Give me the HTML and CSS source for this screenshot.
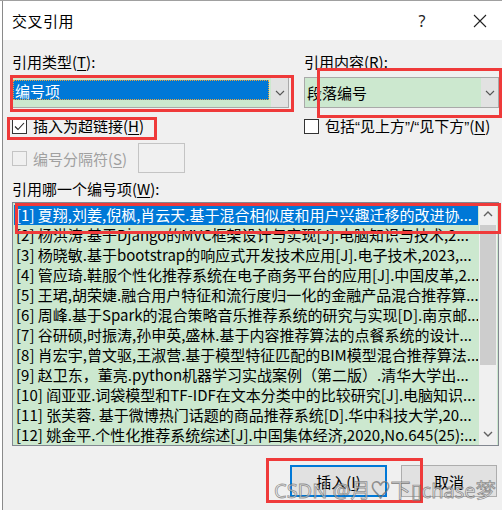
FILE: index.html
```html
<!DOCTYPE html>
<html lang="zh-CN">
<head>
    <meta charset="UTF-8">
    <title>交叉引用</title>
    <link rel="stylesheet" href="styles.css">
</head>
<body>
    <div class="window">
        <div class="dialog">
            <div class="titlebar">
                <span class="title">交叉引用</span>
                <span class="help">?</span>
                <span class="close">
                    <svg width="14" height="14" viewBox="0 0 14 14"><path d="M1 1 L13 13 M13 1 L1 13" stroke="#222" stroke-width="1.1" fill="none"/></svg>
                </span>
            </div>

            <div class="body">
                <div class="pair labels">
                    <div>引用类型(<u>T</u>):</div>
                    <div>引用内容(<u>R</u>):</div>
                </div>

                <div class="pair selects">
                    <div class="combo">
                        <span class="combo-value selected">编号项</span>
                        <span class="combo-btn">
                            <svg width="10" height="6" viewBox="0 0 10 6"><path d="M1 1 L5 5 L9 1" stroke="#555" stroke-width="1.1" fill="none"/></svg>
                        </span>
                    </div>
                    <div class="combo">
                        <span class="combo-value">段落编号</span>
                        <span class="combo-btn">
                            <svg width="10" height="6" viewBox="0 0 10 6"><path d="M1 1 L5 5 L9 1" stroke="#555" stroke-width="1.1" fill="none"/></svg>
                        </span>
                    </div>
                </div>

                <div class="pair checks">
                    <label class="check">
                        <span class="box">
                            <svg width="13" height="13" viewBox="0 0 13 13"><path d="M2 6.5 L5 9.5 L11 3" stroke="#222" stroke-width="1.1" fill="none"/></svg>
                        </span>
                        <span class="check-text">插入为超链接(<u>H</u>)</span>
                    </label>
                    <label class="check">
                        <span class="box"></span>
                        <span class="check-text">包括<span class="q">“</span>见上方<span class="q">”/“</span>见下方<span class="q">”</span>(<u>N</u>)</span>
                    </label>
                </div>

                <div class="sep-row">
                    <label class="check disabled">
                        <span class="box"></span>
                        <span class="sep-text">编号分隔符(<u>S</u>)</span>
                    </label>
                    <span class="sep-input"></span>
                </div>

                <div class="list-label">引用哪一个编号项(<u>W</u>):</div>

                <div class="listbox">
                    <ul class="items">
                        <li class="selected">[1] 夏翔,刘姜,倪枫,肖云天.基于混合相似度和用户兴趣迁移的改进协...</li>
                        <li>[2] 杨洪涛.基于Django的MVC框架设计与实现[J].电脑知识与技术,2...</li>
                        <li>[3] 杨晓敏.基于bootstrap的响应式开发技术应用[J].电子技术,2023,...</li>
                        <li>[4] 管应琦.鞋服个性化推荐系统在电子商务平台的应用[J].中国皮革,2...</li>
                        <li>[5] 王珺,胡荣婕.融合用户特征和流行度归一化的金融产品混合推荐算...</li>
                        <li>[6] 周峰.基于Spark的混合策略音乐推荐系统的研究与实现[D].南京邮...</li>
                        <li>[7] 谷研硕,时振涛,孙申英,盛林.基于内容推荐算法的点餐系统的设计...</li>
                        <li>[8] 肖宏宇,曾文驱,王淑营.基于模型特征匹配的BIM模型混合推荐算法...</li>
                        <li>[9] 赵卫东，董亮.python机器学习实战案例（第二版）.清华大学出...</li>
                        <li>[10] 阎亚亚.词袋模型和TF-IDF在文本分类中的比较研究[J].电脑知识...</li>
                        <li>[11] 张芙蓉. 基于微博热门话题的商品推荐系统[D].华中科技大学,20...</li>
                        <li>[12] 姚金平.个性化推荐系统综述[J].中国集体经济,2020,No.645(25):...</li>
                    </ul>
                    <div class="scrollbar">
                        <span class="arrow">
                            <svg width="10" height="6" viewBox="0 0 10 6"><path d="M1 5 L5 1 L9 5" stroke="#606060" stroke-width="1.4" fill="none"/></svg>
                        </span>
                        <span class="thumb"></span>
                        <span class="track"></span>
                        <span class="arrow">
                            <svg width="10" height="6" viewBox="0 0 10 6"><path d="M1 1 L5 5 L9 1" stroke="#606060" stroke-width="1.4" fill="none"/></svg>
                        </span>
                    </div>
                </div>

                <div class="buttons">
                    <button class="button default">插入(<u>I</u>)</button>
                    <button class="button">取消</button>
                </div>
            </div>
        </div>

        <!-- red annotation boxes -->
        <div class="mark mark-type"></div>
        <div class="mark mark-content"></div>
        <div class="mark mark-link"></div>
        <div class="mark mark-item"></div>
        <div class="mark mark-insert"></div>

        <div class="watermark">CSDN @月♡下▯chase梦</div>
    </div>
</body>
</html>
```

FILE: styles.css
```css
body {
    margin: 0;
    background: #fff;
    font-family: "Noto Sans CJK SC", "Noto Sans", sans-serif;
    font-size: 15px;
    color: #000;
}
u {
    text-decoration-thickness: 1px;
    text-underline-offset: 2px;
}
.window {
    position: relative;
    width: 502px;
    height: 510px;
    overflow: hidden;
    border-top: 1px solid #a0a0a0;
    padding-left: 2px;
    box-sizing: border-box;
    background: #fff;
}
.dialog {
    height: 100%;
    border-left: 1px solid #8a8a8a;
    background: #f0f0f0;
}
.titlebar {
    height: 39px;
    display: flex;
    align-items: center;
    background: #fff;
}
.title {
    padding-left: 9px;
    font-size: 15px;
    letter-spacing: 0.5px;
}
.help {
    margin-left: auto;
    width: 22px;
    text-align: center;
    font-family: "Noto Sans", sans-serif;
    font-size: 16px;
    color: #222;
}
.close {
    width: 30px;
    margin-left: 32px;
    margin-right: 7px;
    display: flex;
    justify-content: center;
}
.body {
    padding: 12px 3px 0 9px;
}
.pair {
    display: grid;
    grid-template-columns: 277px 195px;
    column-gap: 15px;
}
.labels {
    line-height: 20px;
}
.selects {
    margin-top: 5px;
}
.combo {
    height: 31px;
    box-sizing: border-box;
    border: 1px solid #a9a9a9;
    background: #cce8cf;
    display: flex;
}
.combo-value {
    flex: 1;
    height: 20px;
    line-height: 19px;
    margin: 2px 2px 0 0;
    padding-left: 1px;
    box-sizing: border-box;
}
.combo .combo-value:not(.selected) {
    margin-top: 5px;
    padding-left: 2px;
}
.combo-value.selected {
    background: #0078d7;
    color: #fff;
    border: 1px dotted #e8a33c;
}
.combo-btn {
    width: 17px;
    background: #e2e2e2;
    display: flex;
    align-items: center;
    justify-content: center;
}
.checks {
    margin-top: 8px;
    line-height: 20px;
}
.check {
    display: flex;
    align-items: center;
    gap: 6px;
    height: 20px;
    white-space: nowrap;
}
.q {
    font-family: "Liberation Sans", sans-serif;
}
.box {
    flex: none;
    width: 15px;
    height: 15px;
    box-sizing: border-box;
    border: 1px solid #333;
    background: #fff;
    display: flex;
    align-items: center;
    justify-content: center;
}
.sep-row {
    margin-top: 7px;
    height: 30px;
    display: flex;
    align-items: center;
}
.check.disabled {
    color: #a0a0a0;
}
.check.disabled .box {
    border-color: #c4c4c4;
    background: #f0f0f0;
}
.sep-text {
    width: 105px;
}
.sep-input {
    width: 47px;
    height: 30px;
    box-sizing: border-box;
    border: 1px solid #c4c4c4;
    background: #f0f0f0;
}
.list-label {
    margin-top: 6px;
    line-height: 20px;
}
.listbox {
    margin-top: 3px;
    height: 244px;
    box-sizing: border-box;
    border: 1px solid #828790;
    background: #cce8cf;
    display: grid;
    grid-template-columns: 1fr 19px;
}
.items {
    list-style: none;
    margin: 0;
    padding: 2px 1px 0 1px;
    overflow: hidden;
}
.items li {
    height: 20px;
    line-height: 20px;
    padding-left: 2px;
    white-space: nowrap;
    overflow: hidden;
}
.items li.selected {
    background: #0078d7;
    color: #fff;
}
.scrollbar {
    background: #f0f0f0;
    display: flex;
    flex-direction: column;
    margin-right: 1px;
}
.arrow {
    height: 22px;
    display: flex;
    align-items: center;
    justify-content: center;
}
.thumb {
    height: 140px;
    margin: 0 1px;
    background: #cdcdcd;
}
.track {
    flex: 1;
}
.buttons {
    margin-top: 19px;
    margin-right: 2px;
    display: flex;
    justify-content: flex-end;
    gap: 14px;
}
.button {
    width: 96px;
    height: 32px;
    box-sizing: border-box;
    border: 1px solid #adadad;
    background: #e1e1e1;
    font-family: inherit;
    font-size: 15px;
    color: #000;
    padding: 0;
}
.button.default {
    width: 97px;
    border: 2px solid #0078d7;
}
.mark {
    position: absolute;
    border: 3px solid #ef3a3a;
    box-sizing: border-box;
}
.mark-type {
    left: 10px;
    top: 74px;
    width: 284px;
    height: 37px;
}
.mark-content {
    left: 317px;
    top: 67px;
    width: 185px;
    height: 50px;
}
.mark-link {
    left: 7px;
    top: 116px;
    width: 150px;
    height: 23px;
}
.mark-item {
    left: 15px;
    top: 202px;
    width: 486px;
    height: 31px;
}
.mark-insert {
    left: 266px;
    top: 457px;
    width: 157px;
    height: 45px;
}
.watermark {
    position: absolute;
    left: 274px;
    top: 477px;
    font-family: "Noto Sans", "Noto Sans CJK SC", sans-serif;
    font-size: 20px;
    line-height: 26px;
    color: rgba(235, 235, 235, 0.6);
    -webkit-text-stroke: 0.8px rgba(80, 80, 80, 0.6);
    white-space: nowrap;
}
```
